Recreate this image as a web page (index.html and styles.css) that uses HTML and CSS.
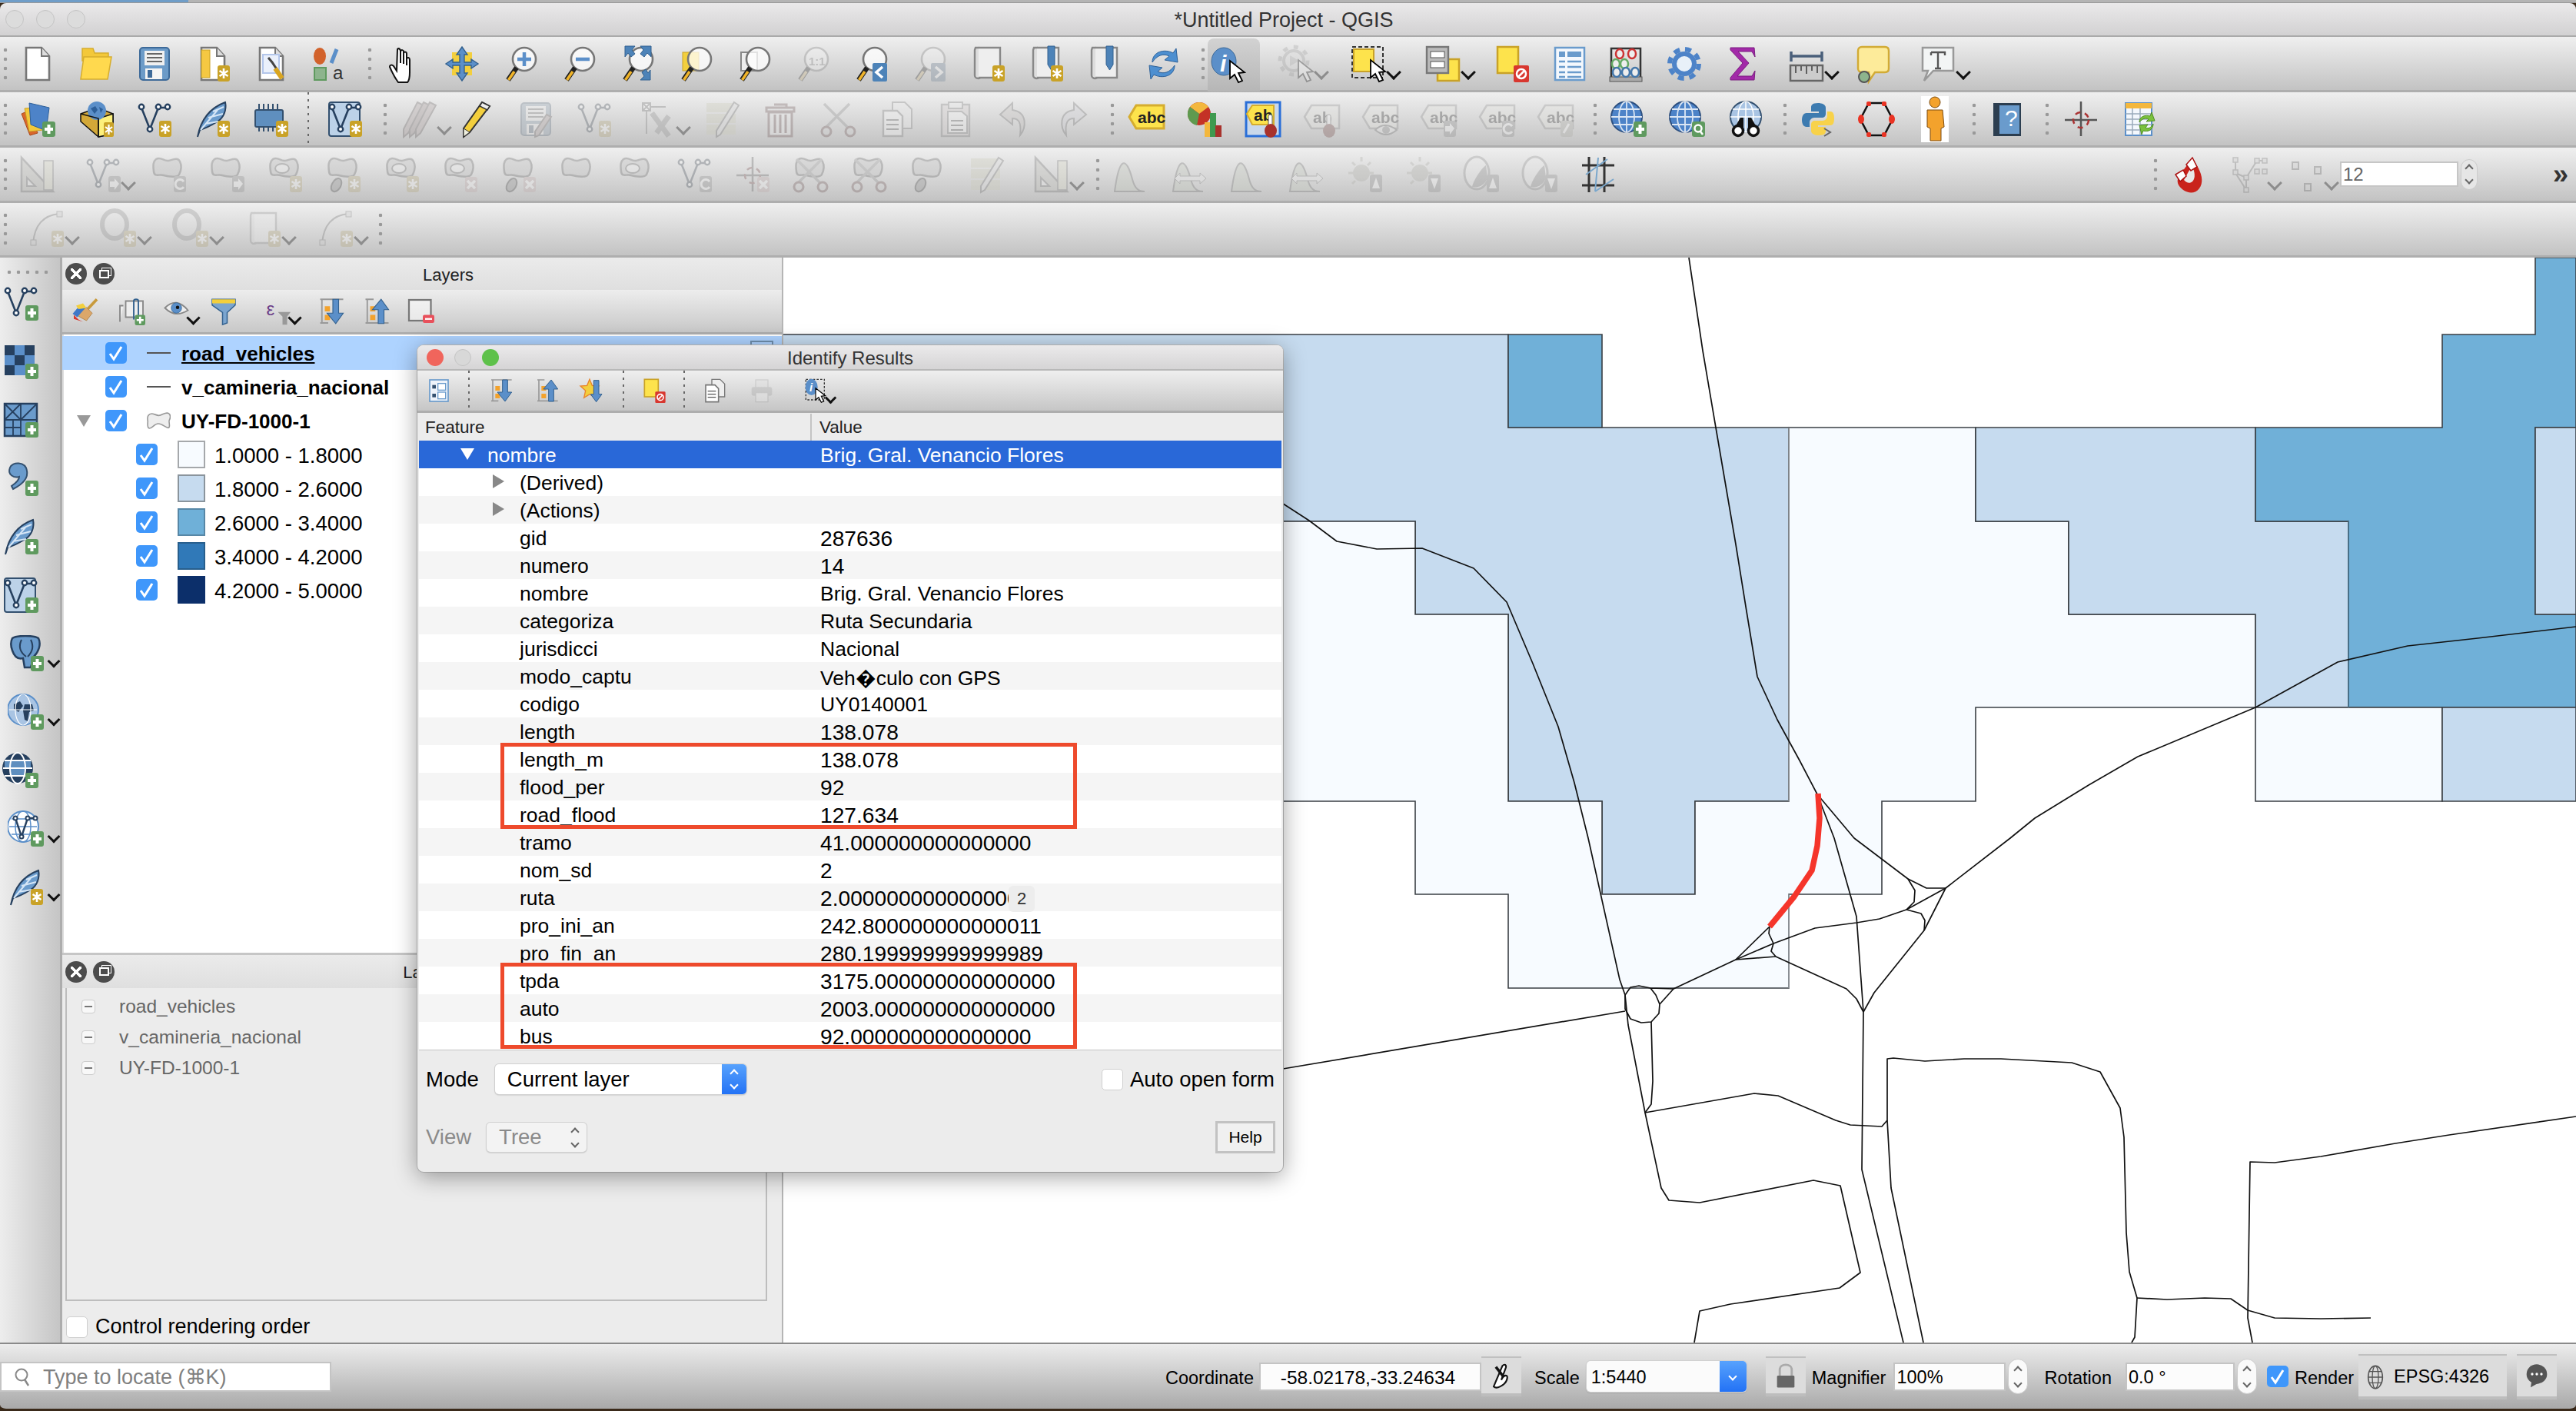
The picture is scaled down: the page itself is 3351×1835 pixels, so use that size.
FILE: index.html
```html
<!DOCTYPE html>
<html lang="en">
<head>
<meta charset="utf-8">
<title>*Untitled Project - QGIS</title>
<link rel="stylesheet" href="styles.css">
</head>
<body>
<svg class="defs" aria-hidden="true"><defs>
<g id="bs"><rect x="30" y="26" width="16" height="21" rx="3" fill="#c9a227"/><path d="M38 30v13M32.5 33l11 7M43.5 33l-11 7" stroke="#fff" stroke-width="2.6"/></g>
<g id="bp"><rect x="30" y="27" width="17" height="20" rx="3" fill="#5f9a5f"/><path d="M38.5 31v12M33 37h11" stroke="#fff" stroke-width="4"/></g>
<g id="bx"><rect x="30" y="27" width="16" height="20" rx="3" fill="#d9a0a0"/><path d="M33 32l10 10M43 32L33 42" stroke="#fff" stroke-width="3.5"/></g>
<g id="cur"><path d="M27 19v23l6-5 5 10 5-2-5-10 8-1z" fill="#fff" stroke="#000" stroke-width="1.8"/></g>
<path id="v" d="M7 9l11 28L29 9h12" fill="none" stroke="#26405f" stroke-width="2.6"/>
<g id="vec"><use href="#v"/><g fill="#fff" stroke="#26405f" stroke-width="2.4"><circle cx="7" cy="8" r="3.2"/><circle cx="18" cy="37" r="3.2"/><circle cx="29" cy="8" r="3.2"/><circle cx="41" cy="8" r="3.2"/></g></g>
<g id="vtree"><path d="M6 4v18l14 22M34 6L20 28v16M34 6h10M6 22l14 6" fill="none" stroke="#666" stroke-width="2"/><g fill="#ccc" stroke="#666" stroke-width="1.5"><rect x="3" y="2" width="6" height="6"/><rect x="3" y="18" width="6" height="6"/><rect x="17" y="25" width="6" height="6"/><rect x="17" y="41" width="6" height="6"/><rect x="31" y="3" width="6" height="6"/><rect x="41" y="3" width="6" height="6"/><rect x="31" y="17" width="6" height="6"/><rect x="41" y="17" width="6" height="6"/></g></g>
<g id="dots"><g fill="#ccc" stroke="#555" stroke-width="2"><rect x="6" y="8" width="8" height="9"/><rect x="35" y="14" width="8" height="9"/><rect x="22" y="36" width="8" height="9"/></g></g>
<g id="new"><path d="M9 3h20l10 11v31H9z" fill="#fff" stroke="#777" stroke-width="2.6"/><path d="M29 3v11h10" fill="#ddd" stroke="#777" stroke-width="2"/></g>
<g id="open"><path d="M6 4h14l2 6h18v10H6z" fill="#f3c83a" stroke="#d6ad2e" stroke-width="1.5"/><path d="M8 15h36l-5 29H4z" fill="#ffd94e" stroke="#d6ad2e" stroke-width="1.5"/></g>
<g id="save"><rect x="5" y="3" width="38" height="42" rx="4" fill="#6c9bc8" stroke="#3d6a99" stroke-width="2"/><rect x="11" y="7" width="26" height="19" fill="#f0f0f0"/><path d="M14 11h20M14 16h20M14 21h20" stroke="#666" stroke-width="2.2"/><rect x="12" y="30" width="22" height="14" fill="#f4f4f4"/><rect x="15" y="32" width="6" height="10" fill="#3d6a99"/></g>
<g id="tmpl"><use href="#new"/><rect x="9" y="6" width="11" height="36" fill="#f5c842" stroke="#c9a227"/><use href="#bs"/></g>
<g id="lay"><use href="#new"/><rect x="13" y="12" width="21" height="24" fill="#eaf0fb" stroke="#b3c6ea" stroke-width="2"/><path d="M20 16l5 6 12 18" stroke="#444" stroke-width="3" fill="none"/><path d="M29 30l9 13" stroke="#d9a520" stroke-width="6"/></g>
<g id="style"><ellipse cx="11" cy="14" rx="8" ry="11" fill="#d2622b"/><path d="M33 5L26 23" stroke="#5b8fc9" stroke-width="5"/><rect x="4" y="29" width="15" height="16" fill="#8db48d" stroke="#5f9a5f" stroke-width="2"/><text x="28" y="44" class="t20">a</text></g>
<g id="hand"><path d="M16 5c2-2 4 0 4 3v15V8c1-3 4-2 4 0v16V10c1-2 4-2 4 1v15-9c2-2 4-1 4 2v16c0 6-1 11-3 13H17c-3-4-8-13-11-20 0-3 3-3 5-1l4 6z" fill="#fff" stroke="#111" stroke-width="2"/></g>
<g id="pansel"><rect x="11" y="9" width="26" height="30" fill="#f3cf3d"/><path d="M24 2l7 10h-4v10h9v-4l9 6-9 6v-4h-9v10h4l-7 10-7-10h4V26h-9v4L3 24l9-6v4h9V12h-4z" fill="#5b8fc9" stroke="#33618f" stroke-width="1.4"/></g>
<g id="lens"><circle cx="29" cy="18" r="15" fill="#fff" fill-opacity=".75" stroke="#777" stroke-width="2.6"/><path d="M19 29L8 45" stroke="#222" stroke-width="6.5"/><path d="M16 34L8.500 45" stroke="#f0b429" stroke-width="3.6"/></g>
<g id="zin"><use href="#lens"/><path d="M29 9v18M20 18h18" stroke="#5b8fc9" stroke-width="4.5"/></g>
<g id="zout"><use href="#lens"/><path d="M20 18h18" stroke="#5b8fc9" stroke-width="4.5"/></g>
<g id="zfull"><use href="#lens"/><path d="M8 1h13l-4 5 4 5-5 4-4-5-4 5zM40 1H28l4 5-4 5 5 4 4-5 5 5V1zM41 32v13H28l5-5-3-5 5-4 3 5z" fill="#4d83b8" stroke="#33618f"/></g>
<g id="zsel"><rect x="7" y="9" width="21" height="24" fill="#f3cf3d" stroke="#c9a227"/><use href="#lens"/></g>
<g id="zlay"><rect x="7" y="9" width="21" height="24" fill="#eee" stroke="#888" stroke-width="2"/><use href="#lens"/></g>
<g id="z11"><use href="#lens"/><text x="19" y="26" class="t15">1:1</text></g>
<g id="zlast"><use href="#lens"/><rect x="26" y="23" width="19" height="24" rx="2" fill="#4d83b8"/><path d="M39 28l-8 7 8 7" fill="none" stroke="#fff" stroke-width="3.5"/></g>
<g id="znext"><use href="#lens"/><rect x="26" y="23" width="19" height="24" rx="2" fill="#4d83b8"/><path d="M32 28l8 7-8 7" fill="none" stroke="#fff" stroke-width="3.5"/></g>
<g id="bm"><path d="M8 3h4c3 0 3 3 3 3v34s0 3-3 3-5-2-5-4V6z" fill="#ddd" stroke="#888" stroke-width="2.4"/><path d="M12 3h28v39H12" fill="#eee" stroke="#888" stroke-width="2.4"/></g>
<g id="rib"><path d="M26 1h9v24l-4.500 7-4.500-7z" fill="#4d83b8" stroke="#33618f"/></g>
<g id="ref"><path d="M10 22C10 8 26 4 37 10l4-6 2 18-17-3 6-5c-8-4-16-1-22 8z" fill="#4d8fd0" stroke="#2d6199"/><path d="M39 26c0 14-16 18-27 12l-4 6-2-18 17 3-6 5c8 4 16 1 22-8z" fill="#4d8fd0" stroke="#2d6199"/></g>
<g id="ident"><ellipse cx="19" cy="20" rx="16" ry="18" fill="#5b8fc9" stroke="#3d6a99"/><text x="14" y="33" class="ti">i</text><use href="#cur"/></g>
<g id="act"><circle cx="21" cy="20" r="13" fill="#ddd" stroke="#999" stroke-width="4"/><circle cx="21" cy="20" r="18" fill="none" stroke="#999" stroke-width="5" stroke-dasharray="6 8"/><path d="M16 13l12 7-12 7z" fill="#aaa"/><use href="#cur"/></g>
<g id="sel"><rect x="3" y="2" width="40" height="40" fill="none" stroke="#333" stroke-width="2" stroke-dasharray="5 3"/><rect x="5" y="5" width="26" height="29" fill="#fde34c" stroke="#c9a227" stroke-width="2"/><use href="#cur"/></g>
<g id="msel"><rect x="17" y="18" width="28" height="28" fill="#fde34c" stroke="#c9a227" stroke-width="2.5"/><rect x="3" y="2" width="28" height="34" fill="#bbb" stroke="#777" stroke-width="2.4"/><rect x="8" y="8" width="18" height="8" fill="#fff" stroke="#555"/><rect x="8" y="21" width="18" height="8" fill="#fff" stroke="#555"/></g>
<g id="desel"><rect x="5" y="2" width="27" height="34" fill="#fde34c" stroke="#c9a227" stroke-width="2.5"/><rect x="26" y="26" width="20" height="22" rx="2" fill="#d8372f"/><circle cx="36" cy="37" r="6" fill="none" stroke="#fff" stroke-width="2.5"/><path d="M32 41l8-8" stroke="#fff" stroke-width="2.5"/></g>
<g id="table"><rect x="5" y="3" width="38" height="42" fill="#f4f8fd" stroke="#6a9bcc" stroke-width="2.5"/><rect x="10" y="8" width="8" height="7" fill="#6a9bcc"/><rect x="21" y="8" width="18" height="7" fill="#6a9bcc"/><path d="M10 21h8M21 21h18M10 28h8M21 28h18M10 35h8M21 35h18M10 41h8M21 41h18" stroke="#6a9bcc" stroke-width="2.4"/></g>
<g id="abacus"><path d="M5 44V4h38v40" fill="none" stroke="#333" stroke-width="2.5"/><rect x="3" y="41" width="42" height="6" fill="#aaa" stroke="#555"/><g fill="#eee" stroke-width="2.5"><ellipse cx="16" cy="11" rx="5" ry="6" stroke="#c33"/><ellipse cx="32" cy="11" rx="5" ry="6" stroke="#c33"/><ellipse cx="11" cy="24" rx="5" ry="6" stroke="#6a6"/><ellipse cx="22" cy="24" rx="5" ry="6" stroke="#6a6"/><ellipse cx="12" cy="35" rx="5" ry="6" stroke="#47a"/><ellipse cx="24" cy="35" rx="5" ry="6" stroke="#47a"/><ellipse cx="36" cy="35" rx="5" ry="6" stroke="#47a"/></g></g>
<g id="tbx"><circle cx="24" cy="24" r="13" fill="#e8f0f8" stroke="#4d83c8" stroke-width="6"/><circle cx="24" cy="24" r="19" fill="none" stroke="#4d83c8" stroke-width="6" stroke-dasharray="8 7"/></g>
<g id="sigma"><path d="M8 3h31l1 12-4-7H18l14 15-15 17h19l4-7-1 12H8v-3l16-19L8 6z" fill="#a22aa8" stroke="#7a1c80"/></g>
<g id="meas"><path d="M4 8v13M44 8v13M4 14h40" stroke="#4a5f7a" stroke-width="3.5"/><rect x="3" y="26" width="42" height="20" fill="#ccc" stroke="#666" stroke-width="2.5"/><path d="M10 27v9M17 27v6M24 27v10M31 27v6M38 27v9" stroke="#555" stroke-width="1.800"/></g>
<g id="tip"><path d="M9 2h30c3 0 5 2 5 5v23c0 3-2 5-5 5H26l-8 12V35h-9c-3 0-5-2-5-5V7c0-3 2-5 5-5z" fill="#fdeb9a" stroke="#d2ab35" stroke-width="2.4"/><ellipse cx="12" cy="41" rx="7" ry="7" fill="#8db48d" stroke="#555" stroke-width="2"/></g>
<g id="tann"><path d="M4 3h40v30H18L6 46l5-13H4z" fill="#f3f5f5" stroke="#999" stroke-width="2.5"/><path d="M15 9h18v4M24 9v21M20 30h8M15 9v4" fill="none" stroke="#555" stroke-width="2.4"/></g>
<g id="ds"><path d="M3 17l9-4 12 29-10 3z" fill="#d9662b" stroke="#a94a1c"/><path d="M7 10l22-2 3 30-19 2z" fill="#f3c83a" stroke="#c9a227"/><path d="M13 3l26 6-4 30-20-8z" fill="#4d83c8" stroke="#2d5f99"/><use href="#bp"/></g>
<g id="gpkg"><path d="M4 17l22-8 20 8v26l-19 4L4 27z" fill="#d3a838" stroke="#111" stroke-width="1.500"/><path d="M27 23l19-6v26l-19 4z" fill="#fdf07c" stroke="#111" stroke-width="1.500"/><circle cx="25" cy="13" r="12" fill="#5b8fc9"/><path d="M17 10l6-3 3 5-4 5zM28 8l5 3-3 5z" fill="#2d5f99"/><path d="M4 17l23 6v24" stroke="#111" fill="none" stroke-width="1.500"/><rect x="34" y="28" width="13" height="19" rx="2" fill="#c9a227"/><path d="M40.500 31v13M36 34l9 7M45 34l-9 7" stroke="#fff" stroke-width="2.2"/></g>
<g id="nvec"><use href="#vec"/><use href="#bs"/></g>
<g id="fth"><path d="M4 47C8 26 18 10 40 2c2 10-2 20-10 25S14 36 7 38z" fill="#6a9bcc" stroke="#26405f" stroke-width="2"/><path d="M8 38l22-26M14 30l17-3M18 22l19-5M24 14l14-6" stroke="#d6e6f6" stroke-width="2"/></g>
<g id="nfth"><use href="#fth"/><use href="#bs"/></g>
<g id="chip"><path d="M8 4v36M14 4v36M20 4v36M26 4v36M32 4v36" stroke="#33506f" stroke-width="2"/><rect x="3" y="12" width="36" height="22" rx="2" fill="#5f8fbf" stroke="#33506f" stroke-width="2"/><use href="#bs"/></g>
<g id="virt0"><rect x="3" y="2" width="40" height="44" rx="3" fill="#bcd2e8" stroke="#33506f" stroke-width="2"/><use href="#v"/><g fill="#fff" stroke="#26405f" stroke-width="2.4"><circle cx="7" cy="8" r="3.2"/><circle cx="18" cy="37" r="3.2"/><circle cx="29" cy="8" r="3.2"/><circle cx="41" cy="8" r="3.2"/></g></g>
<g id="virt"><use href="#virt0"/><use href="#bs"/></g>
<g id="pen"><path d="M30 2l10 5-26 34-8 6 0-11z" fill="#f3cf3d" stroke="#333" stroke-width="2"/><path d="M30 2l10 5-3 5-10-5z" fill="#eee" stroke="#333" stroke-width="1.500"/><path d="M6 36l8 5-8 6z" fill="#eed" stroke="#333"/></g>
<g id="pens"><path d="M22 2l8 4-20 36-6 5 0-10z" fill="#b99" stroke="#655" stroke-width="2"/><path d="M30 2l8 4-20 36-6 5 0-10z" fill="#a88" stroke="#655" stroke-width="2"/><path d="M38 2l8 4-20 36-6 5 0-10z" fill="#b99" stroke="#655" stroke-width="2"/></g>
<g id="sedit"><use href="#save"/><path d="M38 18l6 3-16 24-5 2 0-7z" fill="#b99" stroke="#655" stroke-width="2"/></g>
<g id="dgt"><rect x="4" y="3" width="10" height="10" fill="#fff" stroke="#666" stroke-width="2"/><path d="M4 3l10 10M14 3L4 13M14 8h20M9 13v30" stroke="#666" stroke-width="1.800"/><path d="M16 16l22 30M38 20L22 42" stroke="#888" stroke-width="7"/></g>
<g id="tpen"><rect x="4" y="3" width="38" height="12" fill="#cc9"/><rect x="4" y="17" width="38" height="12" fill="#cc9"/><rect x="4" y="31" width="38" height="13" fill="#cc9"/><path d="M40 2l6 4-24 38-5 3 0-8z" fill="#ddd" stroke="#666" stroke-width="2"/></g>
<g id="trash"><path d="M16 5h16v4M6 9h36v5H6z" fill="none" stroke="#844" stroke-width="3"/><path d="M9 15h30v31H9z" fill="#eee" stroke="#844" stroke-width="3"/><path d="M17 18v24M24 18v24M31 18v24" stroke="#844" stroke-width="3"/></g>
<g id="sci"><path d="M5 4l30 30M38 4L8 34" stroke="#888" stroke-width="3.500"/><circle cx="39" cy="40" r="6" fill="none" stroke="#844" stroke-width="3"/><circle cx="8" cy="40" r="6" fill="none" stroke="#844" stroke-width="3"/></g>
<g id="copy"><path d="M18 2h16l9 9v25H18z" fill="#eee" stroke="#777" stroke-width="2"/><path d="M6 13h18l7 7v26H6z" fill="#fff" stroke="#777" stroke-width="2.400"/><path d="M10 25h16M10 31h16M10 37h16" stroke="#555" stroke-width="2"/></g>
<g id="paste"><rect x="6" y="5" width="36" height="41" fill="#dcc" stroke="#777" stroke-width="2.400"/><rect x="15" y="2" width="18" height="8" fill="#eee" stroke="#777" stroke-width="2"/><path d="M14 14h18l7 6v22H14z" fill="#fff" stroke="#777" stroke-width="2"/><path d="M18 26h16M18 32h16M18 38h16" stroke="#555" stroke-width="2"/></g>
<g id="undo"><path d="M22 3L6 18l16 13v-8c8 0 12 5 10 22 8-10 10-30-10-33z" fill="#c9bdb8" stroke="#666" stroke-width="2"/></g>
<g id="redo"><path d="M26 3l16 15-16 13v-8c-8 0-12 5-10 22-8-10-10-30 10-33z" fill="#ccd" stroke="#666" stroke-width="2"/></g>
<g id="abc"><path d="M2 21l9-15h36v30H11z" fill="#fde34c" stroke="#d6ad2e" stroke-width="3"/><text x="13" y="29" class="t20b">abc</text></g>
<g id="abcg"><path d="M2 21l9-15h36v30H11z" fill="#e8e6d8" stroke="#888" stroke-width="2.500"/><text x="13" y="29" class="t20b">abc</text></g>
<g id="abg2"><path d="M2 21l9-15h36v30H11z" fill="#e8e6d8" stroke="#888" stroke-width="2.500"/><text x="13" y="29" class="t20b">ab</text></g>
<g id="pin"><rect x="31" y="18" width="5" height="16" rx="2" fill="#fff" stroke="#555"/><ellipse cx="34" cy="39" rx="8" ry="9" fill="#a8322c"/></g>
<g id="pie"><circle cx="17" cy="17" r="15" fill="#c43226"/><path d="M17 17L5 8a15 15 0 0 1 24 0z" fill="#f3b73d"/><path d="M17 17L5 8A15 15 0 0 0 14 32z" fill="#5f9a4f"/><rect x="24" y="28" width="8" height="19" fill="#f3b73d"/><rect x="31" y="16" width="8" height="31" fill="#3f9a4f"/><rect x="38" y="32" width="8" height="15" fill="#a8322c"/></g>
<g id="abcpin"><rect x="2" y="2" width="44" height="44" fill="#c9d8ea" stroke="#2a6fd8" stroke-width="3"/><path d="M3 17l7-11h28v25H10z" fill="#fde34c" stroke="#d6ad2e" stroke-width="2"/><text x="12" y="26" class="t20b">ab</text><use href="#pin"/></g>
<g id="eye"><path d="M18 38q12-12 28 0-14 12-28 0z" fill="#eee" stroke="#666" stroke-width="2"/><circle cx="32" cy="38" r="5" fill="#888"/></g>
<g id="garr"><rect x="31" y="26" width="16" height="21" rx="3" fill="#888"/><path d="M33 33h6v-4l6 7-6 8v-4h-6z" fill="#fff"/></g>
<g id="grot"><rect x="31" y="26" width="16" height="21" rx="3" fill="#888"/><path d="M44 40a6 6 0 1 1 0-7" fill="none" stroke="#fff" stroke-width="3"/></g>
<g id="gedit"><rect x="31" y="26" width="16" height="21" rx="3" fill="#aa9"/><path d="M42 30l-7 12" stroke="#fff" stroke-width="3"/></g>
<g id="globe"><circle cx="21" cy="21" r="20" fill="#4d83c8" stroke="#2d4f7f" stroke-width="2"/><g fill="none" stroke="#fff" stroke-width="1.800" opacity=".8"><ellipse cx="21" cy="21" rx="10" ry="20"/><path d="M21 1v40M1 21h40M4 11h34M4 31h34"/></g></g>
<g id="gadd"><use href="#globe"/><use href="#bp"/></g>
<g id="gfind"><use href="#globe"/><rect x="30" y="27" width="17" height="20" rx="3" fill="#5f9a5f"/><circle cx="38" cy="36" r="4.500" fill="none" stroke="#fff" stroke-width="2.500"/><path d="M41 40l3 4" stroke="#fff" stroke-width="2.500"/></g>
<g id="gbin"><circle cx="24" cy="21" r="20" fill="#a9c4e3" stroke="#33506f" stroke-width="2"/><g fill="none" stroke="#fff" stroke-width="1.500"><ellipse cx="24" cy="21" rx="10" ry="20"/><path d="M24 1v40M4 21h40M7 11h34"/></g><path d="M17 22h4v14H9zM31 22h-4v14h12z" fill="#111"/><circle cx="14" cy="39" r="6.500" fill="#fff" stroke="#111" stroke-width="3.500"/><circle cx="34" cy="39" r="6.500" fill="#fff" stroke="#111" stroke-width="3.500"/></g>
<g id="py"><path d="M24 3C16 3 15 6 15 9v5h10v2H9c-4 0-6 4-6 9s2 9 6 9h4v-6c0-3 3-6 6-6h10c3 0 5-2 5-5V9c0-4-5-6-10-6z" fill="#3d7bb0"/><path d="M25 45c8 0 9-3 9-6v-5H24v-2h16c4 0 5-4 5-9s-1-9-5-9h-4v6c0 3-3 6-6 6H20c-3 0-5 2-5 5v8c0 4 5 6 10 6z" fill="#f8d24a"/><path d="M32 36l8 5-8 5" fill="none" stroke="#666" stroke-width="2"/></g>
<g id="hex"><path d="M14 3h20l11 21-11 21H14L3 24z" fill="none" stroke="#111" stroke-width="2.500"/><g fill="#ea3323"><rect x="11" y="1" width="6" height="6" rx="2"/><rect x="31" y="1" width="6" height="6" rx="2"/><rect x="11" y="41" width="6" height="6" rx="2"/><rect x="31" y="41" width="6" height="6" rx="2"/><ellipse cx="4" cy="24" rx="4" ry="6"/><ellipse cx="44" cy="24" rx="4" ry="6"/></g></g>
<g id="man"><rect x="6" y="-6" width="36" height="60" fill="#fff"/><circle cx="24" cy="2" r="7" fill="#f3a22c" stroke="#7a4a10"/><path d="M14 12h20l2 22-4 2v16H18V36l-4-2z" fill="#f3a22c" stroke="#7a4a10"/></g>
<g id="help"><rect x="6" y="3" width="36" height="43" fill="#2c3e50"/><rect x="14" y="6" width="26" height="37" fill="#6a9bcc"/><text x="21" y="33" class="t24w">?</text></g>
<g id="cross"><path d="M24 1v45M3 25h42" stroke="#555" stroke-width="2.500"/><circle cx="24" cy="25" r="10" fill="none" stroke="#a33" stroke-width="2.500" stroke-dasharray="7 6"/></g>
<g id="trf"><rect x="6" y="3" width="34" height="42" fill="#f4f8fd" stroke="#5b8fc9" stroke-width="2"/><rect x="6" y="3" width="34" height="7" fill="#f3b73d"/><path d="M6 17h34M6 24h34M6 31h34M6 38h34M15 10v35M25 10v35" stroke="#9ab" stroke-width="1.500"/><path d="M24 28c0-8 8-10 14-8l2-5 4 11-11 1 3-3c-4-2-8-1-12 4zM42 30c0 8-7 11-13 9l-2 5-3-12 11-1-3 4c4 2 7 0 10-5z" fill="#7ac13d" stroke="#4f8f23"/></g>
<g id="tri"><path d="M3 2l0 44h41z" fill="#bba" stroke="#666" stroke-width="2.500"/><path d="M10 28l0 11h11z" fill="#eee" stroke="#666" stroke-width="2"/><rect x="32" y="6" width="12" height="38" fill="#dda" stroke="#666" stroke-width="1.500"/></g>
<g id="blob"><path d="M8 4c6-4 10 3 16 2s12-5 15 1 1 13-1 17-14 3-20 1S6 28 5 20 4 7 8 4z" fill="#bbb" stroke="#555" stroke-width="2.500"/></g>
<g id="bhole"><use href="#blob"/><ellipse cx="20" cy="16" rx="9" ry="6" fill="#eee" stroke="#555" stroke-width="2"/></g>
<g id="bpart"><use href="#blob"/><path d="M14 30c6-3 8 2 7 7s-6 10-10 9-4-6-2-10 3-5 5-6z" fill="#888" stroke="#333" stroke-width="2"/></g>
<g id="curv"><path d="M6 42C8 20 18 6 40 4" fill="none" stroke="#666" stroke-width="2"/><rect x="3" y="38" width="7" height="7" fill="#ccc" stroke="#666"/><rect x="37" y="1" width="7" height="7" fill="#ccc" stroke="#666"/></g>
<g id="ring"><ellipse cx="18" cy="18" rx="16" ry="18" fill="none" stroke="#888" stroke-width="6"/></g>
<g id="hist"><path d="M3 46C9 0 18 0 26 30c3 12 8 16 16 16z" fill="#bca" stroke="#666" stroke-width="2"/></g>
<g id="hist2"><use href="#hist"/><path d="M12 22l-7 7 7 7v-4h26v4l8-7-8-7v4H12z" fill="#eee" stroke="#666"/></g>
<g id="sun"><circle cx="20" cy="22" r="11" fill="#aa9"/><path d="M20 1v6M3 22h6M31 22h5M8 8l4 4M32 8l-4 4M8 36l4-4" stroke="#aa9" stroke-width="3"/></g>
<g id="gup"><rect x="31" y="24" width="16" height="23" rx="3" fill="#888"/><path d="M39 28l5 14H34z" fill="#fff"/></g>
<g id="gdn"><rect x="31" y="24" width="16" height="23" rx="3" fill="#888"/><path d="M39 43l5-14H34z" fill="#fff"/></g>
<g id="cnt"><ellipse cx="18" cy="22" rx="16" ry="21" fill="#eee" stroke="#888" stroke-width="3"/><path d="M12 40c2-10 14-26 18-28l2 16c-2 8-10 14-20 12z" fill="#888"/></g>
<g id="hash"><path d="M12 1v46M32 1v46M3 12h42M3 38h42" stroke="#333" stroke-width="3"/><path d="M24 2l-4 44M36 4L8 24M44 30L20 46" stroke="#7aa7cc" stroke-width="2"/></g>
<g id="magnet"><path d="M26 2L8 27c-3 6-1 12 6 17s16 5 21-2 4-16-1-26z" fill="#c9231c"/><path d="M27 16c3 8 2 14-1 17s-8 2-11-2l10-18z" fill="#e8e8e8"/><path d="M26 2l6 12-8 5-6-8zM4 24l10-6 4 8-8 7z" fill="#fff" stroke="#a11" stroke-width="1.500"/></g>
<g id="brush"><path d="M44 3L28 20" stroke="#c89a3c" stroke-width="5"/><path d="M26 17l10 10-10 13L8 30z" fill="#dba76a" stroke="#a87a3c"/><path d="M2 28l12-14 10 4-14 16z" fill="#3f78c8"/><path d="M4 30l8 8 8 4-16-5z" fill="#d8372f"/><path d="M8 14l12-4 6 8-14 2z" fill="#f3cf3d"/></g>
<g id="addgrp"><path d="M4 42V14h6M44 6H14v28h30z" fill="#eee" stroke="#888" stroke-width="2.500"/><path d="M28 38V6c0-4 8-4 8 0v26" fill="none" stroke="#33618f" stroke-width="2.500"/><rect x="30" y="30" width="18" height="18" rx="3" fill="#5f9a5f"/><path d="M39 33v12M33 39h12" stroke="#fff" stroke-width="3.500"/></g>
<g id="eyeb"><path d="M2 18q20-20 40 4Q20 36 2 18z" fill="#eee" stroke="#888" stroke-width="2.500"/><circle cx="22" cy="18" r="9" fill="#5b8fc9" stroke="#33618f"/><circle cx="24" cy="17" r="3" fill="#111"/></g>
<g id="funnel"><path d="M4 3h40v10L30 26v18l-8 3V26L4 13z" fill="#7ba5cf" stroke="#33618f" stroke-width="2"/><path d="M4 3h40v7H4z" fill="#f3cf3d"/></g>
<g id="expr"><text x="2" y="30" class="te">ε</text><path d="M22 25h22l-6 8v14h-8V33z" fill="#999"/></g>
<g id="exp"><path d="M6 3h40M6 44h14M9 3v41" stroke="#999" stroke-width="2.500"/><rect x="14" y="15" width="9" height="9" fill="#f3a22c"/><rect x="14" y="30" width="9" height="9" fill="#f3a22c"/><path d="M28 3h10v24h8L33 45 18 27h10z" fill="#5b8fc9" stroke="#33618f" stroke-width="1.500"/></g>
<g id="col"><path d="M6 3h14M6 44h40M9 3v41" stroke="#999" stroke-width="2.500"/><rect x="14" y="15" width="9" height="9" fill="#f3a22c"/><rect x="14" y="30" width="9" height="9" fill="#f3a22c"/><path d="M28 45h10V21h8L33 3 18 21h10z" fill="#5b8fc9" stroke="#33618f" stroke-width="1.500"/></g>
<g id="rm"><rect x="4" y="4" width="38" height="36" fill="#fff" fill-opacity=".5" stroke="#777" stroke-width="3"/><rect x="28" y="30" width="20" height="14" rx="3" fill="#e8505b"/><path d="M32 37h12" stroke="#fff" stroke-width="3"/></g>
<g id="rast"><rect x="3" y="3" width="39" height="39" fill="#5b8fc9"/><path d="M3 3h13v13H3zM29 3h13v13H29zM16 16h13v13H16zM3 29h13v13H3z" fill="#26405f"/><use href="#bp"/></g>
<g id="mesh"><rect x="3" y="3" width="42" height="42" fill="#6a9bcc" stroke="#26405f" stroke-width="2.500"/><path d="M3 24h42M24 3v42M3 3l21 21M24 3L3 24M45 3L24 24M14 24v21M3 34h21" stroke="#26405f" stroke-width="1.800"/><use href="#bp"/></g>
<g id="comma"><path d="M10 10c3-8 20-8 22 4 2 10-6 18-18 24l-2-4c6-4 10-8 10-12-6 2-16-2-12-12z" fill="#6a9bcc" stroke="#33506f" stroke-width="2"/><use href="#bp"/></g>
<g id="pg"><path d="M6 4c6-4 28-4 34 0 4 8 0 18-6 24l-4 14h-8l-2-12c-8 2-12-4-14-10C3 12 4 8 6 4z" fill="#6a9bcc" stroke="#26405f" stroke-width="2.500"/><path d="M18 6c-4 8-2 16 6 22M30 6c4 8 2 16-4 22" fill="none" stroke="#26405f" stroke-width="2"/><use href="#bp"/></g>
<g id="wms"><circle cx="20" cy="21" r="20" fill="#a9c4e3" stroke="#5b8fc9" stroke-width="2"/><path d="M8 14l8-4 4 6-6 8-6-4zM22 14l10 0 2 8-6 2-2 12-4-2-2-12z" fill="#26405f"/><g fill="none" stroke="#fff" stroke-width="1.200"><ellipse cx="20" cy="21" rx="10" ry="20"/><path d="M2 21h36"/></g><use href="#bp"/></g>
<g id="wcs"><circle cx="20" cy="21" r="20" fill="#26405f"/><path d="M3 11h34v10H3zM10 21h20v10H10z" fill="#5f8fbf"/><g fill="none" stroke="#fff" stroke-width="2"><ellipse cx="20" cy="21" rx="10" ry="20"/><path d="M3 11h34M1 21h38M3 31h34"/></g><use href="#bp"/></g>
<g id="wfs"><circle cx="20" cy="21" r="20" fill="#fff" stroke="#5b8fc9" stroke-width="2"/><g fill="none" stroke="#5b8fc9" stroke-width="1.500"><ellipse cx="20" cy="21" rx="10" ry="20"/><path d="M2 21h36M5 11h30M5 31h30"/></g><path d="M10 10l8 24 8-24h10" fill="none" stroke="#26405f" stroke-width="2.400"/><g fill="#fff" stroke="#26405f" stroke-width="2"><circle cx="10" cy="10" r="2.500"/><circle cx="18" cy="34" r="2.500"/><circle cx="26" cy="10" r="2.500"/><circle cx="36" cy="10" r="2.500"/></g><use href="#bp"/></g>
<g id="tree"><rect x="6" y="3" width="36" height="42" fill="#eef3fa" stroke="#6a9bcc" stroke-width="2.500"/><rect x="11" y="13" width="7" height="7" fill="#33506f"/><rect x="11" y="30" width="7" height="7" fill="#33506f"/><rect x="22" y="10" width="15" height="13" fill="#fff" stroke="#6a9bcc" stroke-width="2"/><rect x="22" y="27" width="15" height="13" fill="#fff" stroke="#6a9bcc" stroke-width="2"/></g>
<g id="star"><path d="M18 2l5 12 13 1-10 9 3 14-11-7-11 7 3-14L0 15l13-1z" fill="#f3cf3d" stroke="#e8842c" stroke-width="2"/><path d="M26 4h10v27h6L31 46 20 31h6z" fill="#5b8fc9" stroke="#33618f" stroke-width="1.500"/></g>
<g id="print"><rect x="12" y="3" width="24" height="16" fill="#ddd" stroke="#999" stroke-width="2"/><rect x="4" y="17" width="40" height="17" rx="4" fill="#999"/><rect x="12" y="28" width="24" height="18" fill="#eee" stroke="#999" stroke-width="2"/></g>
<g id="idsel"><rect x="8" y="2" width="36" height="40" fill="none" stroke="#333" stroke-width="2" stroke-dasharray="4 3"/><ellipse cx="19" cy="17" rx="12" ry="16" fill="#5b8fc9"/><text x="15" y="26" class="t20w">i</text><use href="#cur"/></g>
<g id="mark"><path d="M10 44L26 6c4-4 8-2 6 4L24 32c4-10 14-12 10 0-2 6-8 10-12 12-6 3-10 2-12 0z" fill="#fff" stroke="#111" stroke-width="3"/><path d="M14 8l14 18" stroke="#111" stroke-width="5"/></g>
<g id="lock"><path d="M13 24V13c0-12 22-12 22 0v11" fill="none" stroke="#aaa" stroke-width="4"/><rect x="8" y="24" width="32" height="22" rx="2" fill="#666"/></g>
<g id="wire"><ellipse cx="24" cy="24" rx="14" ry="22" fill="none" stroke="#555" stroke-width="2.400"/><ellipse cx="24" cy="24" rx="6" ry="22" fill="none" stroke="#555" stroke-width="2"/><path d="M11 13h26M9 24h30M11 35h26" stroke="#555" stroke-width="2"/></g>
<g id="bub"><ellipse cx="24" cy="21" rx="20" ry="19" fill="#555"/><path d="M14 34l-2 13 14-8z" fill="#555"/><circle cx="15" cy="21" r="2.500" fill="#fff"/><circle cx="24" cy="21" r="2.500" fill="#fff"/><circle cx="33" cy="21" r="2.500" fill="#fff"/></g>
<path id="chk" d="M6 15l5 7L21 6" fill="none" stroke="#fff" stroke-width="3"/>
</defs></svg>

<div class="app">
  <div class="strip"></div>
  <header class="titlebar">
    <span class="lights"><i class="light"></i><i class="light"></i><i class="light"></i></span>
    <span class="wintitle">*Untitled Project - QGIS</span>
  </header>

  <div class="tb">
    <span class="hd hd1"></span>
    <span class="ic"><svg viewBox="0 0 48 48"><use href="#new"/></svg></span>
    <span class="ic"><svg viewBox="0 0 48 48"><use href="#open"/></svg></span>
    <span class="ic"><svg viewBox="0 0 48 48"><use href="#save"/></svg></span>
    <span class="ic"><svg viewBox="0 0 48 48"><use href="#tmpl"/></svg></span>
    <span class="ic"><svg viewBox="0 0 48 48"><use href="#lay"/></svg></span>
    <span class="ic"><svg viewBox="0 0 48 48"><use href="#style"/></svg></span>
    <span class="hd"></span>
    <span class="ic"><svg viewBox="0 0 48 48"><use href="#hand"/></svg></span>
    <span class="ic"><svg viewBox="0 0 48 48"><use href="#pansel"/></svg></span>
    <span class="ic"><svg viewBox="0 0 48 48"><use href="#zin"/></svg></span>
    <span class="ic"><svg viewBox="0 0 48 48"><use href="#zout"/></svg></span>
    <span class="ic"><svg viewBox="0 0 48 48"><use href="#zfull"/></svg></span>
    <span class="ic"><svg viewBox="0 0 48 48"><use href="#zsel"/></svg></span>
    <span class="ic"><svg viewBox="0 0 48 48"><use href="#zlay"/></svg></span>
    <span class="ic off"><svg viewBox="0 0 48 48"><use href="#z11"/></svg></span>
    <span class="ic"><svg viewBox="0 0 48 48"><use href="#zlast"/></svg></span>
    <span class="ic off"><svg viewBox="0 0 48 48"><use href="#znext"/></svg></span>
    <span class="ic"><svg viewBox="0 0 48 48"><use href="#bm"/><use href="#bs"/></svg></span>
    <span class="ic"><svg viewBox="0 0 48 48"><use href="#bm"/><use href="#rib"/><use href="#bs"/></svg></span>
    <span class="ic"><svg viewBox="0 0 48 48"><use href="#bm"/><use href="#rib"/></svg></span>
    <span class="ic"><svg viewBox="0 0 48 48"><use href="#ref"/></svg></span>
    <span class="hd"></span>
    <span class="ic w68 active"><svg viewBox="0 0 48 48"><use href="#ident"/></svg></span>
    <span class="ic w94 dd off"><svg viewBox="0 0 48 48"><use href="#act"/></svg></span>
    <span class="ic w94 dd"><svg viewBox="0 0 48 48"><use href="#sel"/></svg></span>
    <span class="ic w100 dd"><svg viewBox="0 0 48 48"><use href="#msel"/></svg></span>
    <span class="ic w80"><svg viewBox="0 0 48 48"><use href="#desel"/></svg></span>
    <span class="ic w70"><svg viewBox="0 0 48 48"><use href="#table"/></svg></span>
    <span class="ic"><svg viewBox="0 0 48 48"><use href="#abacus"/></svg></span>
    <span class="ic"><svg viewBox="0 0 48 48"><use href="#tbx"/></svg></span>
    <span class="ic"><svg viewBox="0 0 48 48"><use href="#sigma"/></svg></span>
    <span class="ic w90 dd"><svg viewBox="0 0 48 48"><use href="#meas"/></svg></span>
    <span class="ic w84"><svg viewBox="0 0 48 48"><use href="#tip"/></svg></span>
    <span class="ic w84 dd"><svg viewBox="0 0 48 48"><use href="#tann"/></svg></span>
  </div>

  <div class="tb">
    <span class="hd hd1"></span>
    <span class="ic"><svg viewBox="0 0 48 48"><use href="#ds"/></svg></span>
    <span class="ic"><svg viewBox="0 0 48 48"><use href="#gpkg"/></svg></span>
    <span class="ic"><svg viewBox="0 0 48 48"><use href="#nvec"/></svg></span>
    <span class="ic"><svg viewBox="0 0 48 48"><use href="#nfth"/></svg></span>
    <span class="ic"><svg viewBox="0 0 48 48"><use href="#chip"/></svg></span>
    <span class="sep"></span>
    <span class="ic"><svg viewBox="0 0 48 48"><use href="#virt"/></svg></span>
    <span class="hd"></span>
    <span class="ic dd off"><svg viewBox="0 0 48 48"><use href="#pens"/></svg></span>
    <span class="ic"><svg viewBox="0 0 48 48"><use href="#pen"/></svg></span>
    <span class="ic off"><svg viewBox="0 0 48 48"><use href="#sedit"/></svg></span>
    <span class="ic off"><svg viewBox="0 0 48 48"><use href="#nvec"/></svg></span>
    <span class="ic w90 dd off"><svg viewBox="0 0 48 48"><use href="#dgt"/></svg></span>
    <span class="ic off"><svg viewBox="0 0 48 48"><use href="#tpen"/></svg></span>
    <span class="ic off"><svg viewBox="0 0 48 48"><use href="#trash"/></svg></span>
    <span class="ic off"><svg viewBox="0 0 48 48"><use href="#sci"/></svg></span>
    <span class="ic off"><svg viewBox="0 0 48 48"><use href="#copy"/></svg></span>
    <span class="ic off"><svg viewBox="0 0 48 48"><use href="#paste"/></svg></span>
    <span class="ic off"><svg viewBox="0 0 48 48"><use href="#undo"/></svg></span>
    <span class="ic off"><svg viewBox="0 0 48 48"><use href="#redo"/></svg></span>
    <span class="hd"></span>
    <span class="ic"><svg viewBox="0 0 48 48"><use href="#abc"/></svg></span>
    <span class="ic"><svg viewBox="0 0 48 48"><use href="#pie"/></svg></span>
    <span class="ic"><svg viewBox="0 0 48 48"><use href="#abcpin"/></svg></span>
    <span class="ic off"><svg viewBox="0 0 48 48"><use href="#abg2"/><use href="#pin"/></svg></span>
    <span class="ic off"><svg viewBox="0 0 48 48"><use href="#abcg"/><use href="#eye"/></svg></span>
    <span class="ic off"><svg viewBox="0 0 48 48"><use href="#abcg"/><use href="#garr"/></svg></span>
    <span class="ic off"><svg viewBox="0 0 48 48"><use href="#abcg"/><use href="#grot"/></svg></span>
    <span class="ic off"><svg viewBox="0 0 48 48"><use href="#abcg"/><use href="#gedit"/></svg></span>
    <span class="hd"></span>
    <span class="ic"><svg viewBox="0 0 48 48"><use href="#gadd"/></svg></span>
    <span class="ic"><svg viewBox="0 0 48 48"><use href="#gfind"/></svg></span>
    <span class="ic"><svg viewBox="0 0 48 48"><use href="#gbin"/></svg></span>
    <span class="hd hd18"></span>
    <span class="ic"><svg viewBox="0 0 48 48"><use href="#py"/></svg></span>
    <span class="ic"><svg viewBox="0 0 48 48"><use href="#hex"/></svg></span>
    <span class="ic"><svg viewBox="0 0 48 48"><use href="#man"/></svg></span>
    <span class="hd hd18"></span>
    <span class="ic"><svg viewBox="0 0 48 48"><use href="#help"/></svg></span>
    <span class="hd"></span>
    <span class="ic"><svg viewBox="0 0 48 48"><use href="#cross"/></svg></span>
    <span class="ic"><svg viewBox="0 0 48 48"><use href="#trf"/></svg></span>
  </div>

  <div class="tb">
    <span class="hd hd1"></span>
    <span class="ic off"><svg viewBox="0 0 48 48"><use href="#tri"/></svg></span>
    <span class="ic w94 dd off"><svg viewBox="0 0 48 48"><use href="#vec"/><use href="#garr"/></svg></span>
    <span class="ic off"><svg viewBox="0 0 48 48"><use href="#blob"/><use href="#grot"/></svg></span>
    <span class="ic off"><svg viewBox="0 0 48 48"><use href="#blob"/><use href="#garr"/></svg></span>
    <span class="ic off"><svg viewBox="0 0 48 48"><use href="#bhole"/><use href="#bs"/></svg></span>
    <span class="ic off"><svg viewBox="0 0 48 48"><use href="#bpart"/><use href="#bs"/></svg></span>
    <span class="ic off"><svg viewBox="0 0 48 48"><use href="#bhole"/><use href="#bs"/></svg></span>
    <span class="ic off"><svg viewBox="0 0 48 48"><use href="#bhole"/><use href="#bx"/></svg></span>
    <span class="ic off"><svg viewBox="0 0 48 48"><use href="#bpart"/><use href="#bx"/></svg></span>
    <span class="ic off"><svg viewBox="0 0 48 48"><use href="#blob"/></svg></span>
    <span class="ic off"><svg viewBox="0 0 48 48"><use href="#bhole"/></svg></span>
    <span class="ic off"><svg viewBox="0 0 48 48"><use href="#vec"/><use href="#grot"/></svg></span>
    <span class="ic off"><svg viewBox="0 0 48 48"><use href="#cross"/><use href="#bx"/></svg></span>
    <span class="ic off"><svg viewBox="0 0 48 48"><use href="#blob"/><use href="#sci"/></svg></span>
    <span class="ic off"><svg viewBox="0 0 48 48"><use href="#blob"/><use href="#sci"/></svg></span>
    <span class="ic off"><svg viewBox="0 0 48 48"><use href="#bpart"/></svg></span>
    <span class="ic off"><svg viewBox="0 0 48 48"><use href="#tpen"/></svg></span>
    <span class="ic w94 dd off"><svg viewBox="0 0 48 48"><use href="#tri"/></svg></span>
    <span class="hd hd18"></span>
    <span class="ic off"><svg viewBox="0 0 48 48"><use href="#hist"/></svg></span>
    <span class="ic off"><svg viewBox="0 0 48 48"><use href="#hist2"/></svg></span>
    <span class="ic off"><svg viewBox="0 0 48 48"><use href="#hist"/></svg></span>
    <span class="ic off"><svg viewBox="0 0 48 48"><use href="#hist2"/></svg></span>
    <span class="ic off"><svg viewBox="0 0 48 48"><use href="#sun"/><use href="#gup"/></svg></span>
    <span class="ic off"><svg viewBox="0 0 48 48"><use href="#sun"/><use href="#gdn"/></svg></span>
    <span class="ic off"><svg viewBox="0 0 48 48"><use href="#cnt"/><use href="#gup"/></svg></span>
    <span class="ic off"><svg viewBox="0 0 48 48"><use href="#cnt"/><use href="#gdn"/></svg></span>
    <span class="ic"><svg viewBox="0 0 48 48"><use href="#hash"/></svg></span>
    <span class="hd hd-right"></span>
    <span class="ic"><svg viewBox="0 0 48 48"><use href="#magnet"/></svg></span>
    <span class="ic dd off"><svg viewBox="0 0 48 48"><use href="#vtree"/></svg></span>
    <span class="ic w72 dd off"><svg viewBox="0 0 48 48"><use href="#dots"/></svg></span>
    <input class="tol" value="12" aria-label="Tolerance">
    <span class="spin spin-tb"><i class="up"></i><i class="down"></i></span>
    <span class="more">»</span>
  </div>

  <div class="tb tb4">
    <span class="hd hd1 hd14"></span>
    <span class="ic w94 dd off"><svg viewBox="0 0 48 48"><use href="#curv"/><use href="#bs"/></svg></span>
    <span class="ic w94 dd off"><svg viewBox="0 0 48 48"><use href="#ring"/><use href="#bs"/></svg></span>
    <span class="ic w94 dd off"><svg viewBox="0 0 48 48"><use href="#ring"/><use href="#bs"/></svg></span>
    <span class="ic w94 dd off"><svg viewBox="0 0 48 48"><use href="#bm"/><use href="#bs"/></svg></span>
    <span class="ic w94 dd off"><svg viewBox="0 0 48 48"><use href="#curv"/><use href="#bs"/></svg></span>
    <span class="hd hd16"></span>
  </div>

  <main class="main">
    <nav class="sidebar">
      <div class="hd-h"></div>
      <span class="sic"><svg viewBox="0 0 48 48"><use href="#vec"/><use href="#bp"/></svg></span>
      <span class="sic"><svg viewBox="0 0 48 48"><use href="#rast"/></svg></span>
      <span class="sic"><svg viewBox="0 0 48 48"><use href="#mesh"/></svg></span>
      <span class="sic"><svg viewBox="0 0 48 48"><use href="#comma"/></svg></span>
      <span class="sic"><svg viewBox="0 0 48 48"><use href="#fth"/><use href="#bp"/></svg></span>
      <span class="sic"><svg viewBox="0 0 48 48"><use href="#virt0"/><use href="#bp"/></svg></span>
      <span class="sic sdd"><svg viewBox="0 0 48 48"><use href="#pg"/></svg></span>
      <span class="sic sdd"><svg viewBox="0 0 48 48"><use href="#wms"/></svg></span>
      <span class="sic"><svg viewBox="0 0 48 48"><use href="#wcs"/></svg></span>
      <span class="sic sdd"><svg viewBox="0 0 48 48"><use href="#wfs"/></svg></span>
      <span class="sic sdd"><svg viewBox="0 0 48 48"><use href="#nfth"/></svg></span>
    </nav>

    <section class="dock">
      <div class="dockhead">
        <span class="dbtn"><b class="dbx"></b></span><span class="dbtn"><b class="dbf"></b></span>
        <span class="docktitle">Layers</span>
      </div>
      <div class="docktb">
        <span class="ic w60 s36"><svg viewBox="0 0 48 48"><use href="#brush"/></svg></span>
        <span class="ic w60 s36"><svg viewBox="0 0 48 48"><use href="#addgrp"/></svg></span>
        <span class="ic w60 s36 dd"><svg viewBox="0 0 48 48"><use href="#eyeb"/></svg></span>
        <span class="ic w60 s36"><svg viewBox="0 0 48 48"><use href="#funnel"/></svg></span>
        <span class="ic w84 s36 dd"><svg viewBox="0 0 48 48"><use href="#expr"/></svg></span>
        <span class="ic w50 s36"><svg viewBox="0 0 48 48"><use href="#exp"/></svg></span>
        <span class="ic w68 s36"><svg viewBox="0 0 48 48"><use href="#col"/></svg></span>
        <span class="ic w48 s36"><svg viewBox="0 0 48 48"><use href="#rm"/></svg></span>
      </div>
      <div class="tree">
        <div class="node cur"><span class="tw"></span><span class="cb on"><svg viewBox="0 0 28 28"><use href="#chk"/></svg></span><span class="sym"><i class="dash"></i></span><b class="lname under">road_vehicles</b><i class="rowmark"></i></div>
        <div class="node"><span class="tw"></span><span class="cb on"><svg viewBox="0 0 28 28"><use href="#chk"/></svg></span><span class="sym"><i class="dash"></i></span><b class="lname">v_camineria_nacional</b></div>
        <div class="node"><span class="tw"><i class="tdown"></i></span><span class="cb on"><svg viewBox="0 0 28 28"><use href="#chk"/></svg></span><span class="sym"><svg viewBox="0 0 48 36" preserveAspectRatio="none"><path d="M3 8c6-8 14 0 21 0S38 0 44 4s2 12 1 14 3 14-2 14-12-8-20-8-13 10-18 9-3-11-3-13-2-8 1-12z" fill="#eee" stroke="#999" stroke-width="2.500"/></svg></span><b class="lname">UY-FD-1000-1</b></div>
        <div class="node sub"><span class="tw"></span><span class="cb on"><svg viewBox="0 0 28 28"><use href="#chk"/></svg></span><i class="swatch c1"></i><span class="lval">1.0000 - 1.8000</span></div>
        <div class="node sub"><span class="tw"></span><span class="cb on"><svg viewBox="0 0 28 28"><use href="#chk"/></svg></span><i class="swatch c2"></i><span class="lval">1.8000 - 2.6000</span></div>
        <div class="node sub"><span class="tw"></span><span class="cb on"><svg viewBox="0 0 28 28"><use href="#chk"/></svg></span><i class="swatch c3"></i><span class="lval">2.6000 - 3.4000</span></div>
        <div class="node sub"><span class="tw"></span><span class="cb on"><svg viewBox="0 0 28 28"><use href="#chk"/></svg></span><i class="swatch c4"></i><span class="lval">3.4000 - 4.2000</span></div>
        <div class="node sub"><span class="tw"></span><span class="cb on"><svg viewBox="0 0 28 28"><use href="#chk"/></svg></span><i class="swatch c5"></i><span class="lval">4.2000 - 5.0000</span></div>
      </div>
      <div class="dockhead lower">
        <span class="dbtn"><b class="dbx"></b></span><span class="dbtn"><b class="dbf"></b></span>
        <span class="docktitle">Layer Order</span>
      </div>
      <div class="order">
        <div class="oitem"><i class="minus"></i>road_vehicles</div>
        <div class="oitem"><i class="minus"></i>v_camineria_nacional</div>
        <div class="oitem"><i class="minus"></i>UY-FD-1000-1</div>
      </div>
      <label class="ctrl"><span class="cb"></span>Control rendering order</label>
    </section>

    <div class="map">
      <svg viewBox="1019 335 2332 1411" class="mapsvg" role="img" aria-label="Map">
        <g class="cells">
          <path class="k2" d="M1000 435H1962V556H2327V1042H2205V1163H2084V1042H1962V799H1841V678H1000Z"/>
          <path class="k1" d="M1000 678H1841V799H1962V1042H2084V1163H2205V1042H2327V556H2570V678H2691V799H2934V920H2570V1042H2448V1163H2327V1285H1962V1163H1841V1042H1000Z"/>
          <path class="k2" d="M2570 556H2934V678H3055V920H2934V799H2691V678H2570Z"/>
          <path class="k3" d="M3298 335H3351V556H3298V799H3351V920H3055V678H2934V556H3177V435H3298Z"/>
          <path class="k3" d="M1962 435H2084V556H1962Z"/>
          <path class="k2" d="M3298 556H3351V799H3298Z"/>
          <path class="k1" d="M2934 920H3177V1042H2934Z"/>
          <path class="k2" d="M3177 920H3351V1042H3177Z"/>
          <path class="seam" d="M2327 556V1042M2327 1163V1285"/>
          <path class="seam2" d="M3055 678V920"/>
        </g>
        <g class="roads">
          <path d="M2197 335L2215 456 2232 556 2258 708 2272 795 2286 880 2312 936 2341 989 2364 1033 2412 1090 2482 1143 2506 1155 2531 1155 2615 1090 2647 1064 2717 1021 2781 984 2934 920 3041 861 3132 840 3223 830 3351 815"/>
          <path d="M2364 1033L2386 1090 2415 1192 2424 1316 2422 1521 2476 1746"/>
          <path d="M2531 1155L2503 1210 2438 1291 2424 1316"/>
          <path d="M2482 1143L2491 1158 2490 1173 2480 1183 2531 1155"/>
          <path d="M2480 1183L2499 1188 2504 1197 2503 1210"/>
          <path d="M2480 1183L2445 1195 2415 1200 2361 1207 2307 1227 2258 1248 2177 1286 2147 1285 2132 1282 2121 1284 2114 1294 2114 1312 2121 1325 2135 1330 2148 1329 2158 1318 2159 1306 2154 1294 2147 1285"/>
          <path d="M2177 1286L2159 1306"/>
          <path d="M2302 1205L2301 1214 2307 1227 2304 1237 2310 1244 2258 1248 2302 1205"/>
          <path d="M2310 1244L2402 1286 2415 1299 2424 1316"/>
          <path d="M1669 655L1703 677 1739 704 1791 714 1850 713 1917 739 1960 783 1994 863 2027 945 2048 1018 2066 1090 2107 1274 2114 1294 2118 1333 2140 1447 2161 1545 2171 1561 2211 1564 2359 1535 2394 1542 2420 1655 2393 1675 2251 1696 2211 1705 2204 1746"/>
          <path d="M2114 1315L1669 1390"/>
          <path d="M2148 1329L2150 1406 2148 1436 2140 1447 2282 1422 2313 1425 2388 1457 2407 1463 2448 1465 2455 1457 2455 1377 2463 1376 2504 1380 2555 1377 2603 1377 2695 1382 2732 1394 2758 1441 2763 1479 2766 1603 2770 1654 2780 1688 2777 1739 2773 1746"/>
          <path d="M2455 1457L2460 1545 2502 1746"/>
          <path d="M2780 1688L2819 1690 2868 1688 2902 1689 2924 1704 2959 1714 3019 1715 3084 1714"/>
          <path d="M2930 1746L2924 1714 2927 1511 2959 1512 3019 1504 3116 1487 3186 1476 3351 1452"/>
          <path class="red" d="M2365 1032L2367 1064 2364 1100 2357 1132 2334 1166 2302 1205"/>
        </g>
      </svg>
    </div>

    <div class="dialog">
      <div class="dlgtitle">
        <span class="dlights"><i class="tl r"></i><i class="tl g"></i><i class="tl v"></i></span>
        <span class="dlgname">Identify Results</span>
      </div>
      <div class="dlgtb">
        <span class="ic w56 s32"><svg viewBox="0 0 48 48"><use href="#tree"/></svg></span>
        <span class="sep w22"></span>
        <span class="ic w60 s32"><svg viewBox="0 0 48 48"><use href="#exp"/></svg></span>
        <span class="ic w60 s32"><svg viewBox="0 0 48 48"><use href="#col"/></svg></span>
        <span class="ic w60 s32"><svg viewBox="0 0 48 48"><use href="#star"/></svg></span>
        <span class="sep"></span>
        <span class="ic w60 s32"><svg viewBox="0 0 48 48"><use href="#desel"/></svg></span>
        <span class="sep w18"></span>
        <span class="ic w62 s32"><svg viewBox="0 0 48 48"><use href="#copy"/></svg></span>
        <span class="ic w60 s32 off"><svg viewBox="0 0 48 48"><use href="#print"/></svg></span>
        <span class="ic w76 s32 dd"><svg viewBox="0 0 48 48"><use href="#idsel"/></svg></span>
      </div>
      <div class="thead"><span class="th c-a">Feature</span><span class="th c-b">Value</span></div>
      <div class="tbody">
        <div class="tr sel"><span class="td lv0"><i class="td-down"></i>nombre</span><span class="td val">Brig. Gral. Venancio Flores</span></div>
        <div class="tr"><span class="td lv1"><i class="td-right"></i>(Derived)</span><span class="td val"></span></div>
        <div class="tr"><span class="td lv1"><i class="td-right"></i>(Actions)</span><span class="td val"></span></div>
        <div class="tr"><span class="td lv1">gid</span><span class="td val num">287636</span></div>
        <div class="tr"><span class="td lv1">numero</span><span class="td val num">14</span></div>
        <div class="tr"><span class="td lv1">nombre</span><span class="td val">Brig. Gral. Venancio Flores</span></div>
        <div class="tr"><span class="td lv1">categoriza</span><span class="td val">Ruta Secundaria</span></div>
        <div class="tr"><span class="td lv1">jurisdicci</span><span class="td val">Nacional</span></div>
        <div class="tr"><span class="td lv1">modo_captu</span><span class="td val">Veh�culo con GPS</span></div>
        <div class="tr"><span class="td lv1">codigo</span><span class="td val">UY0140001</span></div>
        <div class="tr"><span class="td lv1">length</span><span class="td val num">138.078</span></div>
        <div class="tr"><span class="td lv1">length_m</span><span class="td val num">138.078</span></div>
        <div class="tr"><span class="td lv1">flood_per</span><span class="td val num">92</span></div>
        <div class="tr"><span class="td lv1">road_flood</span><span class="td val num">127.634</span></div>
        <div class="tr"><span class="td lv1">tramo</span><span class="td val num">41.000000000000000</span></div>
        <div class="tr"><span class="td lv1">nom_sd</span><span class="td val num">2</span></div>
        <div class="tr"><span class="td lv1">ruta</span><span class="td val num">2.000000000000000</span></div>
        <div class="tr"><span class="td lv1">pro_ini_an</span><span class="td val num">242.800000000000011</span></div>
        <div class="tr"><span class="td lv1">pro_fin_an</span><span class="td val num">280.199999999999989</span></div>
        <div class="tr"><span class="td lv1">tpda</span><span class="td val num">3175.000000000000000</span></div>
        <div class="tr"><span class="td lv1">auto</span><span class="td val num">2003.000000000000000</span></div>
        <div class="tr"><span class="td lv1">bus</span><span class="td val num">92.000000000000000</span></div>
      </div>
      <div class="dlgrow mode">
        <span class="flabel">Mode</span>
        <span class="combo c-mode"><span class="ctext">Current layer</span><span class="cblue"><i class="up w"></i><i class="down w"></i></span></span>
        <label class="autoopen"><span class="cb"></span>Auto open form</label>
      </div>
      <div class="dlgrow view">
        <span class="flabel dim">View</span>
        <span class="combo c-view"><span class="ctext dim">Tree</span><span class="cgray"><i class="up"></i><i class="down"></i></span></span>
        <span class="help">Help</span>
      </div>
      <i class="redbox rb1"></i>
      <i class="redbox rb2"></i>
      <span class="tooltip">2</span>
    </div>
  </main>

  <footer class="status">
    <span class="locator"><svg viewBox="0 0 24 24" class="lico"><circle cx="10" cy="9" r="7.500" fill="none" stroke="#888" stroke-width="2"/><path d="M14 15l5 8" stroke="#888" stroke-width="2.400"/></svg>Type to locate (⌘K)</span>
    <span class="slabel first">Coordinate</span>
    <span class="sinput i-coord">-58.02178,-33.24634</span>
    <span class="sbtn b52"><svg viewBox="0 0 48 48"><use href="#mark"/></svg></span>
    <span class="slabel l-scale">Scale</span>
    <span class="combo c-scale"><span class="ctext">1:5440</span><span class="cblue"><i class="down w"></i></span></span>
    <span class="sbtn b52 m25"><svg viewBox="0 0 48 48"><use href="#lock"/></svg></span>
    <span class="slabel l-mag">Magnifier</span>
    <span class="sinput i-mag">100%</span>
    <span class="spin"><i class="up"></i><i class="down"></i></span>
    <span class="slabel l-rot">Rotation</span>
    <span class="sinput i-rot">0.0 °</span>
    <span class="spin"><i class="up"></i><i class="down"></i></span>
    <span class="cb on s-cb"><svg viewBox="0 0 28 28"><use href="#chk"/></svg></span>
    <span class="slabel l-ren">Render</span>
    <span class="sbtn epsg"><svg viewBox="0 0 48 48"><use href="#wire"/></svg>EPSG:4326</span>
    <span class="sbtn msg"><svg viewBox="0 0 48 48"><use href="#bub"/></svg></span>
  </footer>
</div>
</body>
</html>
```

FILE: styles.css
```css
* { box-sizing: border-box; }
html, body { margin: 0; padding: 0; }
body { font-family: "Liberation Sans", Arial, sans-serif; color: #000; background: #3a2a1a; }
i { font-style: normal; }
.defs { position: absolute; width: 0; height: 0; }
svg text { font-family: "Liberation Sans", Arial, sans-serif; }
.t20 { font-size: 24px; fill: #333; }
.t15 { font-size: 15px; font-weight: bold; fill: #777; }
.t20b { font-size: 21px; font-weight: bold; fill: #222; }
.t20w { font-size: 22px; font-weight: bold; font-style: italic; fill: #fff; }
.ti { font-size: 30px; font-weight: bold; font-style: italic; fill: #fff; }
.t24w { font-size: 30px; fill: #fff; }
.te { font-size: 32px; fill: #6a3c86; }

.app { width: 3351px; height: 1835px; display: flex; flex-direction: column; position: relative; overflow: hidden; }
.strip { height: 4px; background: linear-gradient(90deg, #6f9dc8 0 245px, #b4b4b4 245px); border-bottom: 1px solid #999; }
.titlebar { height: 44px; display: flex; align-items: center; position: relative; background: linear-gradient(#eae9ea, #d2d1d2); border-bottom: 2px solid #aaa; border-radius: 8px 8px 0 0; }
.lights { display: flex; gap: 16px; padding-left: 7px; }
.light { width: 24px; height: 24px; border-radius: 50%; background: #dcdcdc; border: 1px solid #c4c4c4; }
.wintitle { position: absolute; left: 1526px; width: 288px; padding-top: 2px; text-align: center; font-size: 27px; color: #333; white-space: nowrap; }

.tb { height: 72px; display: flex; align-items: center; background: linear-gradient(#efefef, #c3c3c3); border-bottom: 3px solid #aeaeae; }
.tb4 { height: 71px; }
.ic { flex: none; position: relative; width: 76px; height: 100%; display: flex; align-items: center; justify-content: center; }
.ic svg { width: 48px; height: 48px; overflow: visible; flex: none; }
.off svg { opacity: .28; filter: grayscale(.6); }
.active { background: linear-gradient(#d2d2d2, #b6b6b6); border-radius: 8px 8px 0 0; justify-content: flex-start; padding-left: 2px; margin-top: 3px; }
.dd::after { content: ""; position: absolute; left: calc(50% + 26px); top: calc(50% + 4px); width: 11px; height: 11px; border-right: 3px solid #111; border-bottom: 3px solid #111; transform: rotate(45deg); }
.dd.off::after { border-color: #8d8d8d; }
.w48 { width: 48px; } .w50 { width: 50px; } .w56 { width: 56px; } .w60 { width: 60px; } .w62 { width: 62px; }
.w68 { width: 68px; } .w70 { width: 70px; } .w72 { width: 72px; } .w76 { width: 76px; } .w80 { width: 80px; } .w84 { width: 84px; }
.w90 { width: 90px; } .w94 { width: 94px; } .w100 { width: 100px; }

.hd { flex: none; width: 20px; height: 48px; background: radial-gradient(circle, #999 2px, transparent 2.6px) 11px 0 / 6px 12px repeat-y; }
.hd1 { width: 11px; background-position: 4px 0; }
.hd14 { width: 14px; }
.hd16 { width: 16px; background-position: 8px 0; }
.hd18 { width: 18px; background-position: 10px 0; }
.hd-right { margin-left: auto; width: 22px; }
.sep { flex: none; width: 20px; height: 100%; background: repeating-linear-gradient(#666 0 3px, transparent 3px 9px) center / 2px 100% no-repeat; }
.sep.w22 { width: 22px; }
.sep.w18 { width: 18px; }

.tol { flex: none; margin-left: 8px; width: 154px; height: 33px; border: 2px solid #c6c6c6; background: #fff; padding: 0 2px; font: 24px "Liberation Sans", Arial, sans-serif; color: #666; outline: none; }
.spin { flex: none; width: 26px; height: 46px; margin-left: 3px; background: #fafafa; border-radius: 13px; border: 1px solid #ccc; display: flex; flex-direction: column; align-items: center; justify-content: center; gap: 9px; }
.spin-tb { width: 22px; height: 40px; background: #e6e6e6; gap: 7px; }
.up, .down { display: block; width: 8px; height: 8px; border-left: 2px solid #666; border-top: 2px solid #666; transform: rotate(45deg); }
.down { transform: rotate(225deg); }
.up.w, .down.w { border-color: #fff; }
.more { margin-left: auto; padding-right: 10px; font: bold 36px "Liberation Sans", Arial, sans-serif; color: #333; line-height: 1; }
.spin-tb + .more { margin-left: 98px; }

.main { flex: 1; min-height: 0; display: flex; position: relative; }
.sidebar { flex: none; width: 81px; background: linear-gradient(90deg, #ededed, #c5c5c5); border-right: 3px solid #adadad; display: flex; flex-direction: column; }
.hd-h { height: 21px; margin: 0 0 0 6px; width: 60px; background: radial-gradient(circle, #999 2px, transparent 2.6px) 0 16px / 12px 6px repeat-x; }
.sic { flex: none; position: relative; height: 76px; padding-left: 3px; display: flex; align-items: center; }
.sic svg { width: 48px; height: 48px; }
.sdd { padding-left: 10px; }
.sdd::after { content: ""; position: absolute; left: 64px; top: 42px; width: 9px; height: 9px; border-right: 3px solid #111; border-bottom: 3px solid #111; transform: rotate(45deg); }

.dock { flex: none; width: 938px; display: flex; flex-direction: column; background: #ececec; border-right: 2px solid #b5b5b5; }
.dockhead { height: 42px; flex: none; display: flex; align-items: center; gap: 8px; padding-left: 4px; position: relative; background: linear-gradient(#ebebeb, #dfdfdf); }
.dockhead.lower { height: 46px; border-top: 3px solid #c6c6c6; }
.dbtn { width: 28px; height: 28px; border-radius: 50%; background: #4c4c4c; display: flex; align-items: center; justify-content: center; }
.dbx { width: 14px; height: 14px; background: linear-gradient(45deg, transparent 42%, #fff 42% 58%, transparent 58%), linear-gradient(-45deg, transparent 42%, #fff 42% 58%, transparent 58%); }
.dbf { width: 13px; height: 11px; border: 2px solid #fff; box-shadow: 3px -3px 0 -1px #4c4c4c, 3px -3px 0 0 #fff; }
.docktitle { position: absolute; left: 462px; width: 80px; padding-top: 3px; text-align: center; font-size: 22px; color: #222; white-space: nowrap; display: flex; justify-content: center; }
.docktb { height: 58px; flex: none; display: flex; align-items: center; background: linear-gradient(#ededed, #c8c8c8); border-bottom: 3px solid #adadad; padding-left: 0; }
.s36 svg { width: 36px; height: 36px; }
.s32 svg { width: 32px; height: 32px; }
.s36.dd::after { left: calc(50% + 14px); top: calc(50% + 2px); width: 10px; height: 10px; }
.tree { flex: 1; min-height: 0; background: #fff; padding-top: 2px; border-left: 2px solid #ddd; position: relative; }
.node { height: 44px; display: flex; align-items: center; position: relative; margin-left: -2px; }
.node.cur { background: #aed3ff; }
.tw { flex: none; width: 56px; display: flex; justify-content: center; }
.tdown { width: 0; height: 0; border-left: 9px solid transparent; border-right: 9px solid transparent; border-top: 15px solid #999; }
.cb { flex: none; width: 28px; height: 28px; border-radius: 5px; background: #fff; border: 1px solid #cfcfcf; display: block; }
.cb.on { background: #3f97fb; border: 0; }
.cb svg { display: block; width: 100%; height: 100%; }
.sym { flex: none; width: 31px; height: 24px; margin: 0 14px 0 26px; display: flex; align-items: center; }
.sym svg { width: 31px; height: 24px; }
.dash { width: 31px; height: 2px; background: #555; }
.lname { font-size: 26px; padding-top: 3px; white-space: nowrap; }
.under { text-decoration: underline; }
.sub { padding-left: 40px; }
.swatch { flex: none; width: 36px; height: 36px; margin: 0 12px 0 26px; border: 2px solid #888; }
.c1 { background: #f7fbff; border-color: #a5a8ab; } .c2 { background: #c6dbef; border-color: #8a949c; } .c3 { background: #6fb0d8; border-color: #5787a6; } .c4 { background: #3079b8; border-color: #285f8d; } .c5 { background: #0c2f6a; border-color: #0c2f6a; }
.lval { font-size: 27.500px; padding-top: 3px; white-space: nowrap; }
.rowmark { position: absolute; left: 895px; top: 6px; width: 30px; height: 10px; border: 2px solid #6f8fae; border-bottom: 0; }
.order { margin: 0 19px 0 4px; height: 407px; flex: none; border: 2px solid #bdbdbd; border-top: 0; padding-top: 4px; }
.oitem { height: 40px; display: flex; align-items: center; gap: 31px; padding-left: 19px; font-size: 24.500px; color: #666; white-space: nowrap; }
.minus { width: 18px; height: 18px; border-radius: 4px; background: #f8f8f8; border: 1px solid #ccc; display: flex; align-items: center; justify-content: center; }
.minus::before { content: ""; width: 10px; height: 2px; background: #777; }
.ctrl { flex: none; height: 54px; display: flex; align-items: center; gap: 10px; padding: 13px 0 0 5px; font-size: 27px; white-space: nowrap; }

.map { flex: 1; min-width: 0; background: #fff; }
.mapsvg { display: block; width: 100%; height: 100%; }
.cells path { stroke: #3a3f44; stroke-width: 1.600; }
.k1 { fill: #f7fbff; } .k2 { fill: #c6dbef; } .k3 { fill: #70b0d8; }
.cells .seam { fill: none; stroke: #a7acb2; stroke-width: 1.200; }
.cells .seam2 { fill: none; stroke: #4e87a8; stroke-width: 1.200; }
.roads path { fill: none; stroke: #111; stroke-width: 1.700; stroke-linejoin: round; }
.roads .red { stroke: #f5352b; stroke-width: 7.500; }

.dialog { position: absolute; left: 543px; top: 114px; width: 1126px; height: 1075px; display: flex; flex-direction: column; background: #ececec; border-radius: 8px; box-shadow: 0 6px 30px rgba(0, 0, 0, .38), 0 0 0 1px #c6c6c6; overflow: visible; }
.dlgtitle { height: 33px; flex: none; display: flex; align-items: center; position: relative; background: linear-gradient(#ebeaeb, #d5d4d5); border-bottom: 2px solid #b8b8b8; border-radius: 8px 8px 0 0; }
.dlights { display: flex; gap: 14px; padding-left: 12px; }
.tl { width: 22px; height: 22px; border-radius: 50%; }
.tl.r { background: #f0655c; } .tl.g { background: #d8d8d8; border: 1px solid #c4c4c4; } .tl.v { background: #5ec14a; }
.dlgname { position: absolute; left: 481px; padding-top: 2px; font-size: 24px; color: #333; white-space: nowrap; }
.dlgtb { height: 55px; flex: none; display: flex; align-items: center; background: linear-gradient(#efefef, #c6c6c6); border-bottom: 3px solid #adadad; }
.dlgtb .w56 { width: 56px; }
.dlgtb .dd::after { left: calc(50% + 16px); top: calc(50% + 4px); width: 8px; height: 8px; }
.thead { height: 36px; flex: none; display: flex; align-items: center; background: #ececec; }
.th { font-size: 22.500px; color: #222; white-space: nowrap; }
.c-a { width: 513px; padding-left: 10px; padding-top: 1px; border-right: 2px solid #c4c4c4; line-height: 34px; }
.c-b { padding-left: 10px; padding-top: 1px; }
.tbody { flex: none; margin: 0 2px; background: #fff; border-bottom: 1px solid #c4c4c4; }
.tr { height: 36px; display: flex; align-items: center; font-size: 26.500px; padding-top: 3px; white-space: nowrap; }
.tr:nth-child(odd) { background: #f5f5f5; }
.tr:nth-child(even) { background: #fff; }
.tr.sel { background: #2968d8; color: #fff; }
.td { display: flex; align-items: center; position: relative; }
.lv0, .lv1 { flex: none; width: 520px; }
.lv0 { padding-left: 89px; }
.lv1 { padding-left: 131px; }
.val { padding-left: 2px; }
.num { font-size: 28.200px; }
.td-down { position: absolute; left: 54px; top: 6px; width: 0; height: 0; border-left: 9px solid transparent; border-right: 9px solid transparent; border-top: 15px solid #fff; }
.td-right { position: absolute; left: 96px; top: 4px; width: 0; height: 0; border-top: 9px solid transparent; border-bottom: 9px solid transparent; border-left: 15px solid #888; }
.dlgrow { flex: none; display: flex; align-items: center; font-size: 27.500px; position: relative; padding-left: 11px; }
.mode { height: 75px; }
.view { height: 76px; }
.flabel { white-space: nowrap; }
.dim { color: #8a8a8a; }
.combo { display: flex; align-items: center; background: #fff; border-radius: 5px; box-shadow: 0 0 0 1px #d0d0d0, 0 1px 2px rgba(0, 0, 0, .3); position: relative; overflow: hidden; flex: none; }
.c-mode { margin-left: 21px; width: 327px; height: 39px; }
.c-view { margin-left: 20px; width: 130px; height: 38px; background: #f3f3f3; }
.ctext { padding-left: 16px; white-space: nowrap; flex: 1; }
.cblue { flex: none; width: 32px; height: 100%; background: linear-gradient(#57a2fd, #2372f5); display: flex; flex-direction: column; align-items: center; justify-content: center; gap: 7px; }
.cgray { flex: none; width: 30px; display: flex; flex-direction: column; align-items: center; gap: 7px; }
.autoopen { margin-left: auto; display: flex; align-items: center; gap: 9px; padding-right: 11px; white-space: nowrap; }
.help { margin-left: auto; margin-right: 10px; width: 78px; height: 42px; display: flex; align-items: center; justify-content: center; font-size: 21px; border: 3px solid #c2c2c2; background: #f0f0f0; }
.redbox { position: absolute; left: 108px; width: 750px; border: 5px solid #ee4a2c; pointer-events: none; }
.rb1 { top: 517px; height: 112px; }
.rb2 { top: 803px; height: 112px; }
.tooltip { position: absolute; left: 769px; top: 703px; width: 34px; height: 34px; border-radius: 6px; background: #ededed; font-size: 22px; display: flex; align-items: center; justify-content: center; color: #333; }

.status { height: 89px; flex: none; display: flex; align-items: center; background: linear-gradient(#ececec, #a9a9a9); border-top: 2px solid #8a8a8a; border-bottom: 3px solid #3a2a1a; border-radius: 0 0 8px 8px; font-size: 23.500px; }
.locator { flex: none; width: 431px; height: 39px; display: flex; align-items: center; background: #fff; border: 2px solid #c4c4c4; font-size: 27px; color: #808080; gap: 14px; padding-left: 16px; padding-top: 2px; white-space: nowrap; }
.lico { width: 24px; height: 30px; }
.slabel { flex: none; padding-top: 4px; white-space: nowrap; }
.slabel.first { margin-left: 1085px; }
.sinput { flex: none; height: 37px; padding-top: 3px; display: flex; align-items: center; background: #fcfcfc; border: 2px solid #c4c4c4; white-space: nowrap; }
.i-coord { width: 289px; margin-left: 7px; padding-right: 6px; justify-content: center; font-size: 24.500px; }
.sbtn { flex: none; display: flex; align-items: center; justify-content: center; background: #dcdcdc; border-top: 2px solid #c0c0c0; border-bottom: 4px solid #bdbdbd; }
.b52 { width: 52px; height: 52px; }
.b52 svg { width: 34px; height: 40px; }
.m25 { margin-left: 25px; }
.l-scale { margin-left: 17px; }
.c-scale { margin-left: 9px; width: 208px; height: 40px; background: #fbfbfb; }
.c-scale .ctext { padding-left: 6px; padding-top: 2px; }
.c-scale .cblue { width: 35px; }
.l-mag { margin-left: 8px; }
.i-mag { width: 146px; margin-left: 10px; padding-left: 2px; }
.l-rot { margin-left: 21px; }
.i-rot { width: 142px; margin-left: 18px; padding-left: 2px; }
.s-cb { margin-left: 13px; }
.l-ren { margin-left: 8px; }
.epsg { width: 193px; height: 59px; margin-left: 6px; gap: 8px; justify-content: flex-start; padding-left: 6px; padding-top: 3px; }
.epsg svg { width: 32px; height: 44px; }
.msg { width: 52px; height: 59px; margin-left: 13px; }
.msg svg { width: 32px; height: 40px; }
```
